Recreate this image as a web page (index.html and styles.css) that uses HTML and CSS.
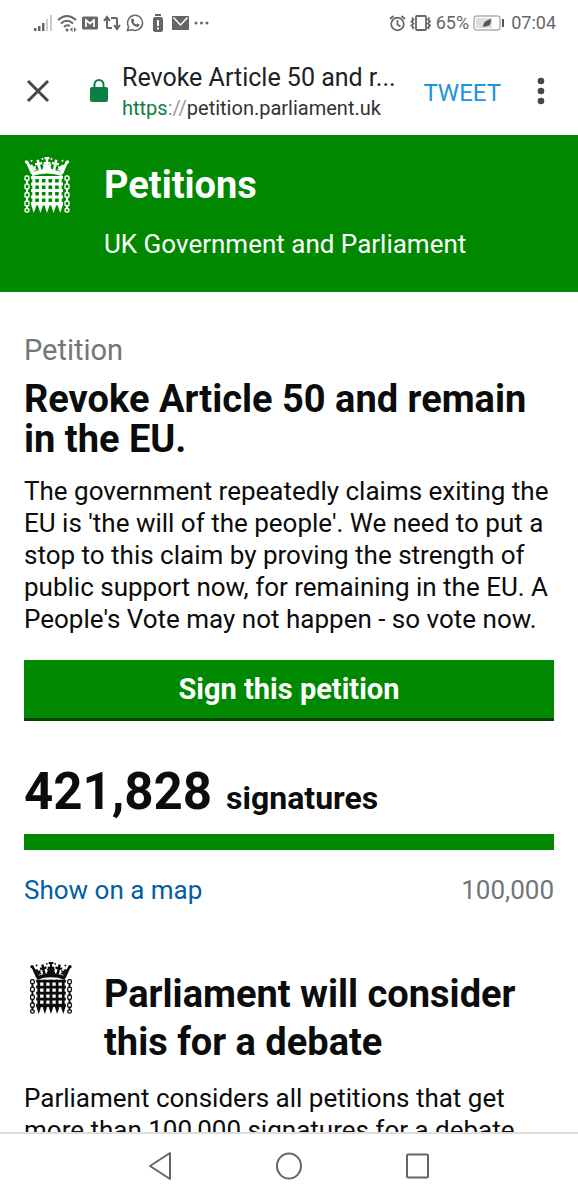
FILE: index.html
```html
<!DOCTYPE html>
<html lang="en">
<head>
<meta charset="utf-8">
<meta name="viewport" content="width=device-width, initial-scale=1">
<title>Revoke Article 50 and remain in the EU. - Petitions</title>
<link rel="stylesheet" href="styles.css">
</head>
<body>
<svg class="sprite" aria-hidden="true">
  <defs>
    <g id="chain" fill="none" stroke="currentColor" stroke-width="1.4">
      <rect x="1" y="19" width="4" height="4.500" rx="1.600"/>
      <rect x="1" y="27" width="4" height="5" rx="1.600"/>
      <rect x="1" y="35.500" width="4" height="5" rx="1.600"/>
      <rect x="1" y="44" width="4" height="5" rx="1.600"/>
      <rect x="1" y="51.500" width="4" height="3.500" rx="1.600"/>
      <path stroke-width="2" d="M3 22.500v5M3 31v5.500M3 39.500v5.500M3 48v4"/>
    </g>
    <g id="crown-half">
      <path fill="currentColor" d="M23 12Q14 12.500 6.500 15.500L8.500 19Q15 16.500 23 16.500z"/>
      <path fill="currentColor" d="M1.500 4.500L4 4l6 11-3 2z"/>
      <path fill="currentColor" d="M9 14L7.500 10.500 5.500 8.500 8 7.500 9.500 9.500 12 9 11.500 11.500 13 13z"/>
      <path fill="currentColor" d="M14.500 13L13.500 8.500 11 8V6L13 6.200 12.500 3 15 2.500 15.500 5.500 18 4.700 18.300 7 16 8 17.500 13z"/>
      <path fill="currentColor" d="M18 13L19.500 9.500 18.500 8 20.500 6.500 21.500 8 23 7.500V13z"/>
      <g fill="currentColor"><circle cx="2.500" cy="5" r="1.700"/><circle cx="7.500" cy="3.800" r="1"/><circle cx="18.500" cy="2" r="1"/></g>
    </g>
    <symbol id="portcullis" viewBox="0 0 46 56">
      <use href="#crown-half"/>
      <use href="#crown-half" transform="matrix(-1 0 0 1 46 0)"/>
      <path fill="currentColor" d="M20.500 0h5v2.200h-1.300V5h2.300v2.500h-2.300V14h-2.400V7.500h-2.300V5h2.300V2.200h-1.300z"/>
      <path fill="currentColor" d="M7 19h32v3H7zM7 25.500h32v3H7zM7 32h32v3H7zM7 38.500h32v3H7zM7 45h32v3.500H7z"/>
      <path fill="currentColor" d="M8.300 19h3v26l.8 4-2.300 7-2.300-7 .8-4zM14.900 19h3v26l.8 4-2.300 7-2.300-7 .8-4zM21.500 19h3v26l.8 4-2.300 7-2.300-7 .8-4zM28.100 19h3v26l.8 4-2.300 7-2.300-7 .8-4zM34.700 19h3v26l.8 4-2.300 7-2.300-7 .8-4z"/>
      <use href="#chain"/><use href="#chain" x="40"/>
    </symbol>
  </defs>
</svg>

<div class="status">
  <div class="status-icons">
    <svg width="18" height="18" viewBox="0 0 18 18" fill="#666"><path d="M0 14h2.500v3H0zM4 12h2.500v5H4zM8 9h2.500v8H8z"/><path fill="#ccc" d="M12 5h2v12h-2zM16 1h2v16h-2z"/></svg>
    <svg width="20" height="18" viewBox="0 0 20 18" fill="none" stroke="#666" stroke-width="2"><path d="M1 6Q10-2 19 6M4 9.500Q10 4 16 9.500M7 13Q10 10 13 12"/><circle cx="10" cy="16" r="1.500" fill="#666" stroke="none"/><path fill="#666" stroke="none" d="M15.500 13v5l-2.500-2.500zM17 13v5l2.500-2.500z"/></svg>
    <svg width="16" height="14" viewBox="0 0 16 14"><rect width="16" height="13" y=".5" rx="1.500" fill="#666"/><path d="M4 11V4l4 3.500L12 4v7" fill="none" stroke="#fff" stroke-width="1.700"/></svg>
    <svg width="18" height="16" viewBox="0 0 18 16" fill="none" stroke="#666" stroke-width="2"><path d="M9 13H5Q4 13 4 12V3M1 6l3-4 3 4M8 3h5q1 0 1 1v9M11 10l3 4 3-4"/></svg>
    <svg width="18" height="18" viewBox="0 0 18 18" fill="none" stroke="#666" stroke-width="1.500"><path d="M1.500 16.500l1-4A7.500 7.500 0 1 1 6 15.700z"/><path fill="#666" stroke="none" d="M6 4.500l1.500.2.800 2-.8 1.200q1 2 2.800 2.700l1.200-1 2 1q0 2.200-2.500 2.500Q6 12 5 7q0-1.800 1-2.500z"/></svg>
    <svg class="wide" width="10" height="18" viewBox="0 0 10 18"><path fill="#666" d="M2 0h6v2H2zM1.500 3h7L10 4.500v12L8.500 18h-7L0 16.500v-12z"/><path fill="#fff" d="M4 6h2v6H4zM4 13.500h2v2H4z"/></svg>
    <svg class="wide" width="17" height="14" viewBox="0 0 17 14"><path fill="#666" d="M0 0h17v14H0z"/><path d="M1.500 1.500L8.500 9l7-7.500" fill="none" stroke="#fff" stroke-width="1.500"/></svg>
    <svg width="15" height="4" viewBox="0 0 15 4" fill="#666"><circle cx="2" cy="2" r="1.500"/><circle cx="7.500" cy="2" r="1.500"/><circle cx="13" cy="2" r="1.500"/></svg>
  </div>
  <div class="status-info">
    <svg width="17" height="18" viewBox="0 0 17 18" fill="none" stroke="#666" stroke-width="1.700"><circle cx="8.500" cy="10" r="6.300"/><path d="M8.500 6v4.500l3 2M1 5l3.500-3M16 5l-3.500-3"/></svg>
    <svg width="22" height="16" viewBox="0 0 22 16" fill="none" stroke="#666" stroke-width="1.800"><rect x="6" y="1" width="10" height="14" rx="1"/><path d="M2 2.500l1.500 2-2 2 2 2-2 2 2 2-1 1.500M19.500 2.500l-1.500 2 2 2-2 2 2 2-2 2 1 1.500"/></svg>
    <span>65%</span>
    <svg class="battery" width="32" height="16" viewBox="0 0 32 16"><rect x="1" y="1" width="26" height="14" rx="2" fill="#fff" stroke="#888"/><path fill="#ddd" d="M3 3h16v10H3z"/><path fill="#555" d="M10 12q-.5-6 8-8 .5 8-6.500 7.500zM29 4h2v8h-2z"/></svg>
    <span>07:04</span>
  </div>
</div>

<div class="toolbar">
  <button class="icon-button" aria-label="Close"><svg width="24" height="24" viewBox="0 0 24 24"><path d="M2 2l20 20M22 2L2 22" stroke="#454649" stroke-width="3"/></svg></button>
  <svg class="lock" width="18" height="24" viewBox="0 0 18 24" role="img" aria-label="Secure"><rect y="8" width="18" height="15" rx="2" fill="#0b8043"/><path d="M4.500 9V5.500a4.500 4.500 0 0 1 9 0V9" fill="none" stroke="#0b8043" stroke-width="2"/></svg>
  <div class="page-info">
    <div class="page-title">Revoke Article 50 and r...</div>
    <div class="page-url"><span class="scheme">https</span><span class="slashes">://</span>petition.parliament.uk</div>
  </div>
  <button class="tweet">TWEET</button>
  <button class="icon-button" aria-label="More options"><svg width="8" height="28" viewBox="0 0 8 28" fill="#454649"><circle cx="4" cy="4" r="3.300"/><circle cx="4" cy="14" r="3.300"/><circle cx="4" cy="24" r="3.300"/></svg></button>
</div>

<div class="page">
  <header class="banner">
    <svg class="crest" role="img" aria-label="Parliament"><use href="#portcullis"/></svg>
    <div>
      <div class="site-name">Petitions</div>
      <div class="tagline">UK Government and Parliament</div>
    </div>
  </header>
  <main>
    <div class="kicker">Petition</div>
    <h1>Revoke Article 50 and remain in the EU.</h1>
    <p>The government repeatedly claims exiting the EU is 'the will of the people'. We need to put a stop to this claim by proving the strength of public support now, for remaining in the EU. A People's Vote may not happen - so vote now.</p>
    <button class="sign">Sign this petition</button>
    <div class="count"><span class="number">421,828</span> signatures</div>
    <div class="progress"></div>
    <div class="meta"><a href="#map">Show on a map</a><span>100,000</span></div>
    <section>
      <div class="debate-head">
        <svg class="crest" role="img" aria-label="Parliament"><use href="#portcullis"/></svg>
        <h2>Parliament will consider this for a debate</h2>
      </div>
      <p>Parliament considers all petitions that get more than 100,000 signatures for a debate</p>
    </section>
  </main>
</div>

<nav class="system-nav">
  <button class="icon-button" aria-label="Back"><svg width="26" height="30" viewBox="0 0 26 30"><path d="M23 2v26L3 15z" fill="none" stroke="#666" stroke-width="2" stroke-linejoin="round"/></svg></button>
  <button class="icon-button" aria-label="Home"><svg width="28" height="30" viewBox="0 0 28 30"><ellipse cx="14" cy="15" rx="12" ry="12.500" fill="none" stroke="#666" stroke-width="2"/></svg></button>
  <button class="icon-button" aria-label="Recent apps"><svg width="26" height="30" viewBox="0 0 26 30"><rect x="2" y="3.500" width="21" height="23" rx="1" fill="none" stroke="#666" stroke-width="2"/></svg></button>
</nav>
</body>
</html>
```
FILE: styles.css
```css
* { box-sizing: border-box; }

body {
  margin: 0;
  height: 100vh;
  display: flex;
  flex-direction: column;
  overflow: hidden;
  background: #fff;
  color: #0b0c0c;
  font-family: Roboto, "Liberation Sans", sans-serif;
  font-size: 26px;
  line-height: 32px;
}

button {
  border: 0;
  padding: 0;
  background: none;
  font-family: inherit;
}

svg { display: block; flex: none; }
h1, h2, p { margin: 0; }
.sprite { position: absolute; width: 0; height: 0; }

.status {
  display: flex;
  justify-content: space-between;
  flex: none;
  height: 46px;
  padding: 0 22px 0 34px;
  color: #666;
  font-size: 18px;
}
.status-icons, .status-info { display: flex; align-items: center; }
.status-icons { gap: 5px; }
.status-icons .wide { margin-left: 4px; }
.status-info { gap: 4px; }
.battery { margin-right: 2px; }

.toolbar {
  display: flex;
  align-items: center;
  flex: none;
  height: 89px;
  padding: 0 33px 0 26px;
}
.icon-button { flex: none; }
.lock { margin: 0 14px 0 40px; }
.page-info { flex: 1; min-width: 0; padding-top: 2px; }
.page-title {
  overflow: hidden;
  text-overflow: ellipsis;
  white-space: nowrap;
  color: #202124;
  font-size: 25px;
}
.page-url { font-size: 20px; line-height: 28px; color: #333; }
.scheme { color: #0b8043; }
.slashes { color: #999; }
.tweet {
  margin: 4px 36px 0 16px;
  color: #1b95e0;
  font-size: 24px;
}

.page { flex: 1; min-height: 0; overflow: hidden; }
.crest { width: 46px; height: 56px; }

.banner {
  display: grid;
  grid-template-columns: 80px 1fr;
  padding: 22px 24px 32px;
  background: #008800;
  color: #fff;
}
.site-name { font-size: 38px; line-height: 56px; font-weight: 700; }
.tagline { margin-top: 15px; }

main { padding: 40px 24px 0; }
.kicker { font-size: 29px; line-height: 36px; color: #6f777b; }
h1 { margin-top: 11px; font-size: 38px; line-height: 40px; }
main p { margin-top: 16px; }
.sign {
  display: block;
  width: 100%;
  height: 61px;
  margin-top: 25px;
  border-bottom: 3px solid #004400;
  background: #008800;
  color: #fff;
  font-size: 29px;
  font-weight: 700;
}
.count {
  margin-top: 39px;
  font-size: 32px;
  line-height: 64px;
  font-weight: 700;
}
.number { margin-right: 6px; font-size: 51px; }
.progress { height: 16px; margin-top: 4px; background: #008800; }
.meta {
  display: flex;
  justify-content: space-between;
  margin-top: 24px;
  color: #6f777b;
}
.meta a { color: #005ea5; text-decoration: none; }
section { margin-top: 56px; }
.debate-head { display: grid; grid-template-columns: 80px 1fr; }
.debate-head .crest { width: 54px; height: 52px; }
h2 { margin-top: 8px; font-size: 38px; line-height: 48px; }

.system-nav {
  display: flex;
  justify-content: center;
  align-items: center;
  gap: 102px;
  flex: none;
  height: 68px;
  padding-bottom: 2px;
  border-top: 2px solid #ddd;
}
```
